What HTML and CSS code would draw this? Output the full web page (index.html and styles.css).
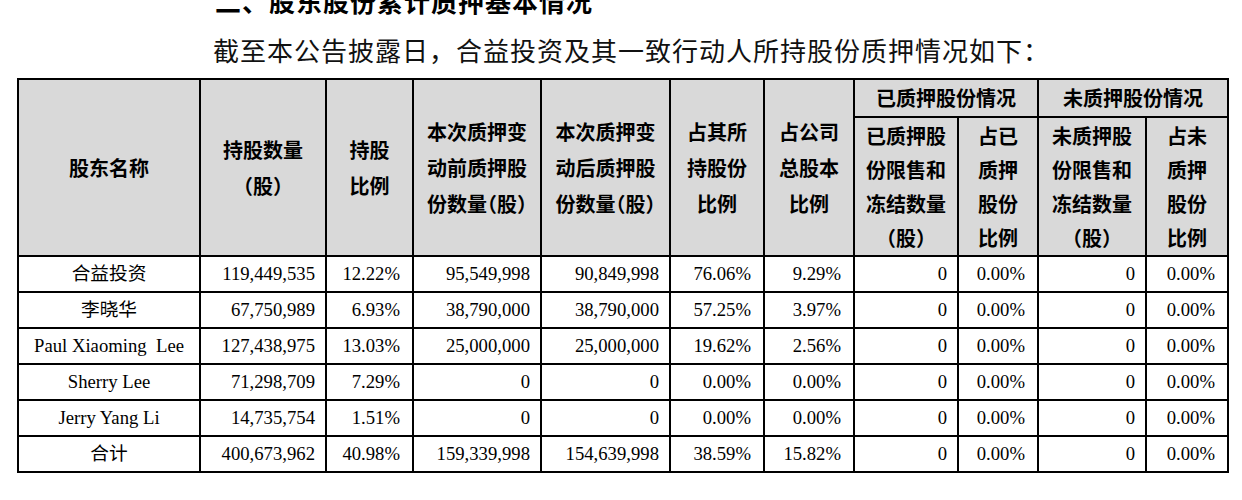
FILE: index.html
```html
<!DOCTYPE html>
<html lang="zh-CN">
<head>
<meta charset="utf-8">
<title>股东股份累计质押基本情况</title>
<link rel="stylesheet" href="styles.css">
</head>
<body>
<div class="doc">
  <h2 class="heading">二、股东股份累计质押基本情况</h2>
  <p class="intro">截至本公告披露日，合益投资及其一致行动人所持股份质押情况如下：</p>
  <table class="pledge">
    <colgroup>
      <col class="c1"><col class="c2"><col class="c3"><col class="c4"><col class="c5"><col class="c6"><col class="c7"><col class="c8"><col class="c9"><col class="c10"><col class="c11">
    </colgroup>
    <thead>
      <tr class="h1">
        <th rowspan="2">股东名称</th>
        <th rowspan="2">持股数量<br>（股）</th>
        <th rowspan="2">持股<br>比例</th>
        <th rowspan="2">本次质押变<br>动前质押股<br>份数量<span class="halt">（股）</span></th>
        <th rowspan="2">本次质押变<br>动后质押股<br>份数量<span class="halt">（股）</span></th>
        <th rowspan="2">占其所<br>持股份<br>比例</th>
        <th rowspan="2">占公司<br>总股本<br>比例</th>
        <th colspan="2">已质押股份情况</th>
        <th colspan="2">未质押股份情况</th>
      </tr>
      <tr class="h2">
        <th class="four">已质押股<br>份限售和<br>冻结数量<br>（股）</th>
        <th class="four">占已<br>质押<br>股份<br>比例</th>
        <th class="four">未质押股<br>份限售和<br>冻结数量<br>（股）</th>
        <th class="four">占未<br>质押<br>股份<br>比例</th>
      </tr>
    </thead>
    <tbody>
      <tr>
        <td class="name">合益投资</td>
        <td class="num">119,449,535</td><td class="pct">12.22%</td><td class="num">95,549,998</td><td class="num">90,849,998</td><td class="pct">76.06%</td><td class="pct">9.29%</td><td class="num">0</td><td class="pct">0.00%</td><td class="num">0</td><td class="pct">0.00%</td>
      </tr>
      <tr>
        <td class="name">李晓华</td>
        <td class="num">67,750,989</td><td class="pct">6.93%</td><td class="num">38,790,000</td><td class="num">38,790,000</td><td class="pct">57.25%</td><td class="pct">3.97%</td><td class="num">0</td><td class="pct">0.00%</td><td class="num">0</td><td class="pct">0.00%</td>
      </tr>
      <tr>
        <td class="name">Paul Xiaoming&nbsp; Lee</td>
        <td class="num">127,438,975</td><td class="pct">13.03%</td><td class="num">25,000,000</td><td class="num">25,000,000</td><td class="pct">19.62%</td><td class="pct">2.56%</td><td class="num">0</td><td class="pct">0.00%</td><td class="num">0</td><td class="pct">0.00%</td>
      </tr>
      <tr>
        <td class="name">Sherry Lee</td>
        <td class="num">71,298,709</td><td class="pct">7.29%</td><td class="num">0</td><td class="num">0</td><td class="pct">0.00%</td><td class="pct">0.00%</td><td class="num">0</td><td class="pct">0.00%</td><td class="num">0</td><td class="pct">0.00%</td>
      </tr>
      <tr>
        <td class="name">Jerry Yang Li</td>
        <td class="num">14,735,754</td><td class="pct">1.51%</td><td class="num">0</td><td class="num">0</td><td class="pct">0.00%</td><td class="pct">0.00%</td><td class="num">0</td><td class="pct">0.00%</td><td class="num">0</td><td class="pct">0.00%</td>
      </tr>
      <tr>
        <td class="name">合计</td>
        <td class="num">400,673,962</td><td class="pct">40.98%</td><td class="num">159,339,998</td><td class="num">154,639,998</td><td class="pct">38.59%</td><td class="pct">15.82%</td><td class="num">0</td><td class="pct">0.00%</td><td class="num">0</td><td class="pct">0.00%</td>
      </tr>
    </tbody>
  </table>
</div>
</body>
</html>
```

FILE: styles.css
```css
html, body {
  margin: 0;
  padding: 0;
  background: #ffffff;
  color: #000000;
}

.doc {
  padding-left: 17px;
  font-family: "Liberation Serif", "Noto Sans CJK SC", serif;
}

.heading {
  margin: -12px 0 0 0;
  padding-left: 198px;
  font-family: "Noto Sans CJK SC", sans-serif;
  font-weight: 700;
  font-size: 26px;
  line-height: 26px;
  letter-spacing: 1px;
}

.intro {
  margin: 23px 0 0 0;
  padding-left: 196px;
  font-family: "Noto Sans CJK SC", sans-serif;
  font-weight: 400;
  font-size: 26px;
  line-height: 26px;
  letter-spacing: 1px;
  color: #111111;
}

.pledge {
  margin-top: 15px;
  border-collapse: collapse;
  table-layout: fixed;
  width: 1210px;
  font-size: 18.7px;
}

.c1 { width: 182px; }
.c2 { width: 126px; }
.c3 { width: 87px; }
.c4 { width: 128px; }
.c5 { width: 129px; }
.c6 { width: 94px; }
.c7 { width: 90px; }
.c8 { width: 104px; }
.c9 { width: 80px; }
.c10 { width: 108px; }
.c11 { width: 82px; }

.pledge th,
.pledge td {
  border: 2px solid #000000;
  padding: 0;
}

.pledge th {
  background: #d9d9d9;
  font-family: "Noto Sans CJK SC", sans-serif;
  font-weight: 700;
  font-size: 20px;
  line-height: 36px;
  text-align: center;
  vertical-align: middle;
}

.pledge th.four {
  line-height: 34px;
}

.pledge .h1 { height: 37px; }
.pledge .h2 { height: 139px; }

.halt {
  font-feature-settings: "halt";
}

.pledge tbody tr { height: 36px; }

.pledge td {
  line-height: 22px;
  vertical-align: middle;
  white-space: nowrap;
}

.pledge td.name { text-align: center; }
.pledge td.num { text-align: right; padding-right: 10px; }
.pledge td.pct { text-align: right; padding-right: 12px; }
```
